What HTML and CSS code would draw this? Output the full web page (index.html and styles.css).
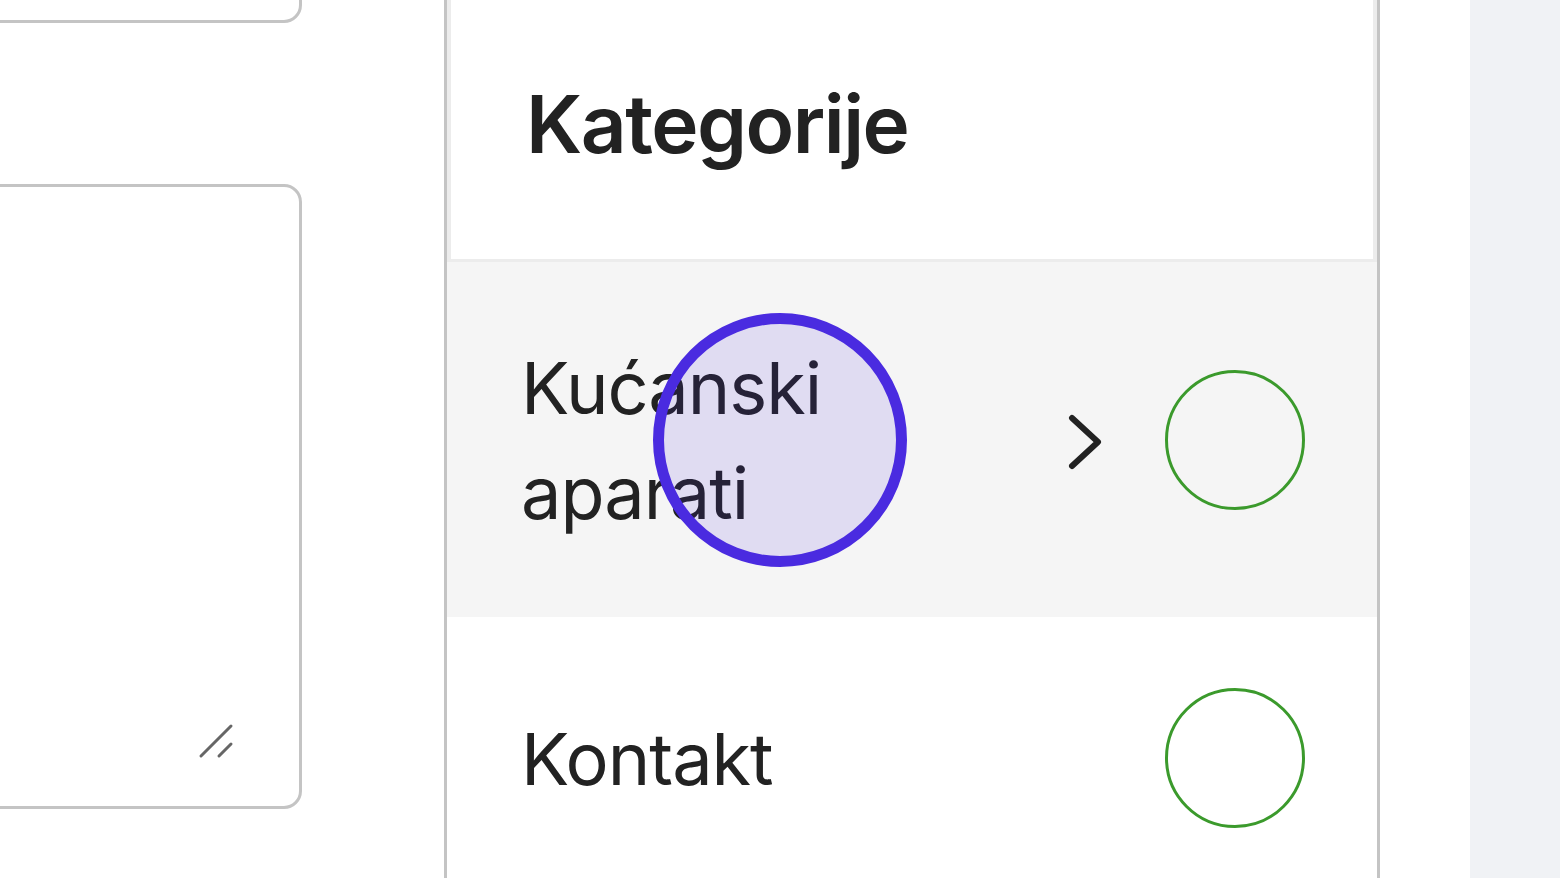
FILE: index.html
```html
<!DOCTYPE html>
<html lang="hr">
<head>
    <meta charset="utf-8">
    <title>Kategorije</title>
    <link rel="stylesheet" href="styles.css">
</head>
<body>
    <div class="page">
        <div class="form-col">
            <div class="field field-input"></div>
            <div class="field field-area">
                <svg class="grip" width="36" height="36" viewBox="0 0 36 36">
                    <line x1="3" y1="33" x2="33" y2="3" />
                    <line x1="21" y1="33" x2="33" y2="21" />
                </svg>
            </div>
        </div>

        <div class="panel">
            <div class="panel-head">
                <h1>Kategorije</h1>
            </div>

            <div class="cat-row active">
                <span class="cat-label">Kućanski aparati</span>
                <svg class="chevron" width="40" height="60" viewBox="0 0 40 60">
                    <polyline points="8,8 34,32 8,56" />
                </svg>
                <span class="check"></span>
            </div>

            <div class="cat-row">
                <span class="cat-label">Kontakt</span>
                <span class="check"></span>
            </div>
        </div>

        <div class="gap"></div>
        <div class="side"></div>
    </div>

    <!-- touch indicator -->
    <div class="touch"></div>
</body>
</html>
```

FILE: styles.css
```css
html, body {
    margin: 0;
    height: 100%;
    overflow: hidden;
    background: #fff;
}

body {
    font-family: Inter, "Noto Sans", sans-serif;
    color: #222;
}

.page {
    display: flex;
    height: 878px;
}

/* left form column */
.form-col {
    width: 444px;
    flex: none;
}

.field {
    margin-left: -30px;
    width: 332px;
    border: 3px solid #c4c4c4;
    border-radius: 18px;
    box-sizing: border-box;
    background: #fff;
}

.field-input {
    margin-top: -60px;
    height: 83px;
}

.field-area {
    margin-top: 161px;
    height: 625px;
    display: flex;
    align-items: flex-end;
    justify-content: flex-end;
    padding: 0 65px 47px 0;
}

.grip line {
    stroke: #666;
    stroke-width: 3;
    stroke-linecap: round;
}

/* category panel */
.panel {
    width: 936px;
    flex: none;
    border-left: 3px solid #c4c4c4;
    border-right: 3px solid #c4c4c4;
    box-sizing: border-box;
}

.panel-head {
    height: 246px;
    padding: 0 0 13px 75px;
    border: 4px solid #ececec;
    border-top: none;
    border-bottom-width: 3px;
    display: flex;
    align-items: center;
    background: #fff;
}

.panel-head h1 {
    margin: 0;
    font-size: 80px;
    font-weight: 600;
    letter-spacing: -1.5px;
}

.cat-row {
    display: flex;
    align-items: center;
    padding: 0 72px 0 74px;
    height: 355px;
    box-sizing: border-box;
}

.cat-row + .cat-row {
    height: 282px;
}

.cat-row.active {
    background: #f5f5f5;
}

.cat-label {
    flex: 1;
    max-width: 470px;
    font-size: 72px;
    line-height: 105px;
    letter-spacing: -1px;
    margin-right: auto;
}

.chevron {
    flex: none;
    margin-right: 61px;
}

.chevron polyline {
    fill: none;
    stroke: #222;
    stroke-width: 6;
    stroke-linecap: round;
    stroke-linejoin: round;
}

.check {
    flex: none;
    width: 140px;
    height: 140px;
    border: 3px solid #3b9a2c;
    border-radius: 50%;
    box-sizing: border-box;
}

.gap {
    width: 90px;
    flex: none;
}

.side {
    flex: 1;
    background: #f0f2f5;
}

.touch {
    position: absolute;
    left: 653px;
    top: 313px;
    width: 254px;
    height: 254px;
    border: 11px solid #4a2be0;
    border-radius: 50%;
    box-sizing: border-box;
    background: rgba(74, 43, 224, 0.12);
}
```
